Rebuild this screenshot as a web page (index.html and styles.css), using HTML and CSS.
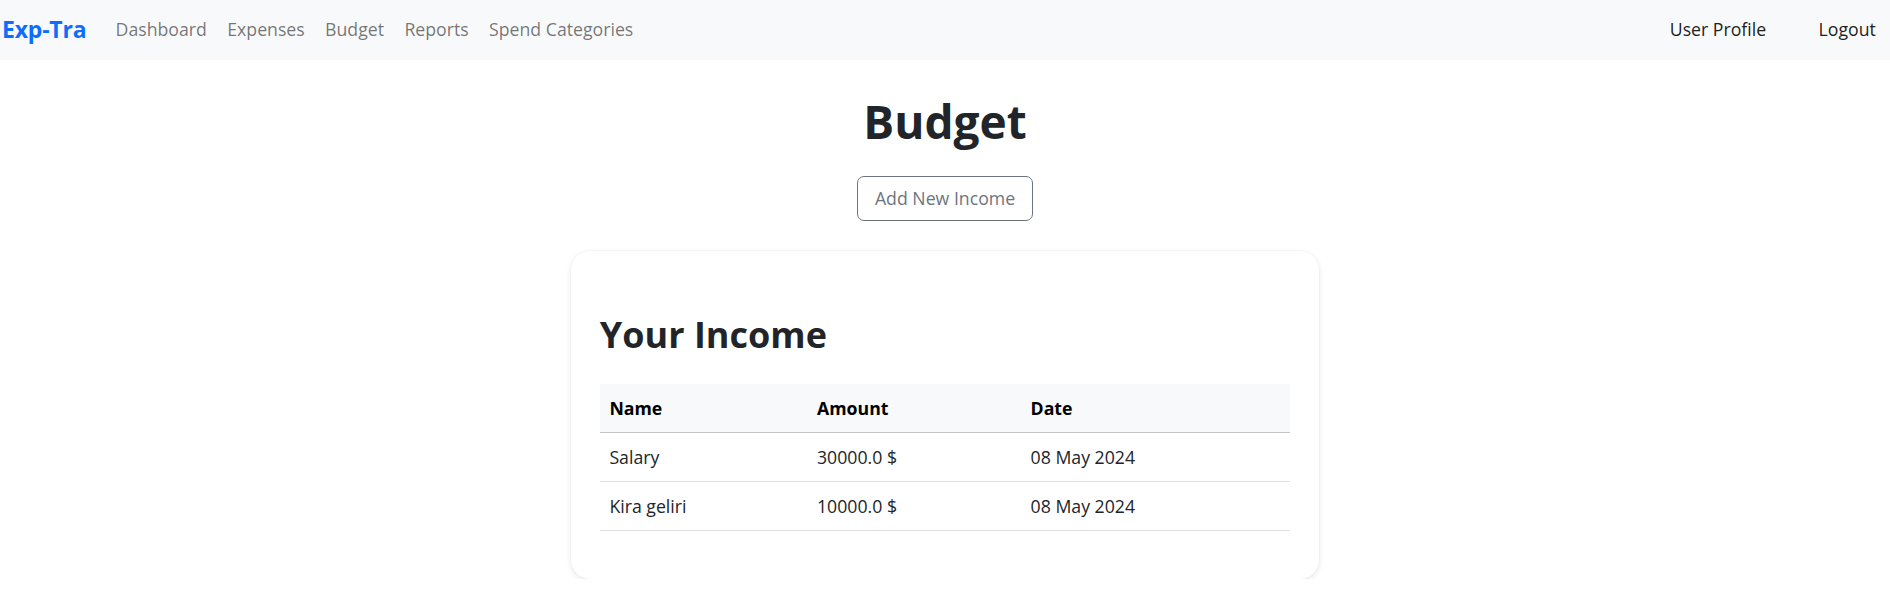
FILE: index.html
```html
<!DOCTYPE html>
<html lang="en">
<head>
<meta charset="utf-8">
<title>Budget - Exp-Tra</title>
<link rel="stylesheet" href="styles.css">
</head>
<body>
<nav class="navbar">
  <a class="brand" href="#">Exp-Tra</a>
  <ul class="nav-left">
    <li><a class="nav-link" href="#">Dashboard</a></li>
    <li><a class="nav-link" href="#">Expenses</a></li>
    <li><a class="nav-link" href="#">Budget</a></li>
    <li><a class="nav-link" href="#">Reports</a></li>
    <li><a class="nav-link" href="#">Spend Categories</a></li>
  </ul>
  <ul class="nav-right">
    <li><a class="nav-link dark" href="#">User Profile</a></li>
    <li><a class="nav-link dark" href="#">Logout</a></li>
  </ul>
</nav>
<main class="page">
  <h1 class="title">Budget</h1>
  <a class="btn-outline" href="#">Add New Income</a>
  <section class="card">
    <h2 class="card-title">Your Income</h2>
    <table class="table">
      <thead>
        <tr>
          <th class="col-name">Name</th>
          <th class="col-amount">Amount</th>
          <th class="col-date">Date</th>
        </tr>
      </thead>
      <tbody>
        <tr>
          <td>Salary</td>
          <td>30000.0 $</td>
          <td>08 May 2024</td>
        </tr>
        <tr>
          <td>Kira geliri</td>
          <td>10000.0 $</td>
          <td>08 May 2024</td>
        </tr>
      </tbody>
    </table>
  </section>
</main>
</body>
</html>
```
FILE: styles.css
```css
* {
  box-sizing: border-box;
}

body {
  margin: 0;
  font-family: "Open Sans", "Noto Sans", sans-serif;
  font-size: 17.7px;
  line-height: 1.5;
  color: #212529;
  background: #fff;
}

a {
  text-decoration: none;
}

.navbar {
  height: 60px;
  background: #f8f9fa;
  display: flex;
  align-items: center;
  padding: 0 4px 2px 2px;
}

.brand {
  font-weight: 700;
  font-size: 23px;
  color: #0d6efd;
  margin-right: 19px;
  letter-spacing: -0.2px;
}

.nav-left,
.nav-right {
  list-style: none;
  margin: 0;
  padding: 0;
  display: flex;
  align-items: center;
}

.nav-right {
  margin-left: auto;
  gap: 32px;
}

.nav-link {
  display: block;
  padding: 0 10.2px;
  color: rgba(0, 0, 0, 0.55);
}

.nav-link.dark {
  color: rgba(0, 0, 0, 0.9);
}

.page {
  display: flex;
  flex-direction: column;
  align-items: center;
}

.title {
  margin: 34px 0 0;
  font-size: 46px;
  line-height: 1.2;
  font-weight: 700;
  color: #212529;
}

.btn-outline {
  margin-top: 27px;
  height: 45px;
  padding: 0 17px;
  display: flex;
  align-items: center;
  color: #6c757d;
  border: 1px solid #6c757d;
  border-radius: 7px;
}

.card {
  margin-top: 30px;
  width: 748px;
  padding: 28.8px;
  background: #fff;
  border-radius: 19px;
  box-shadow: 0 2px 6px rgba(0, 0, 0, 0.09), 0 0 0 1px rgba(0, 0, 0, 0.02);
}

.card-title {
  margin: 33px 0 0;
  font-size: 36px;
  line-height: 1.2;
  font-weight: 700;
  color: #212529;
}

.table {
  width: 100%;
  margin: 28.3px 0 19.2px;
  border-collapse: collapse;
}

.table th,
.table td {
  padding: 9.6px;
  line-height: 28.8px;
  text-align: left;
  border-bottom: 1px solid #dee2e6;
}

.table th {
  font-weight: 700;
  color: #000;
  background: #f8f9fa;
  border-bottom-color: #c3c5c7;
}

.table td {
  color: #212529;
}

.col-name {
  width: 30.07%;
}

.col-amount {
  width: 30.94%;
}

.col-date {
  width: 38.99%;
}
```
